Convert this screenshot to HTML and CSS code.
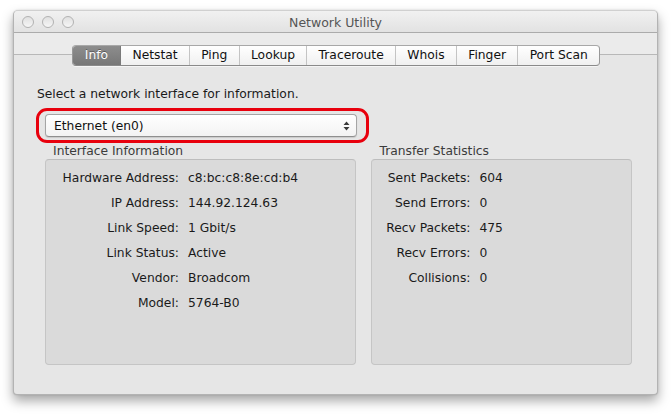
FILE: index.html
```html
<!DOCTYPE html>
<html>
<head>
<meta charset="utf-8">
<title>Network Utility</title>
<link rel="stylesheet" href="styles.css">
</head>
<body>
<div class="window">
  <div class="titlebar">
    <div class="lights"><span class="light"></span><span class="light"></span><span class="light"></span></div>
    <div class="title">Network Utility</div>
    <div></div>
  </div>
  <div class="toolbar">
    <div class="tabs">
      <div class="tab selected">Info</div>
      <div class="tab">Netstat</div>
      <div class="tab">Ping</div>
      <div class="tab">Lookup</div>
      <div class="tab">Traceroute</div>
      <div class="tab">Whois</div>
      <div class="tab">Finger</div>
      <div class="tab">Port Scan</div>
    </div>
  </div>
  <div class="content">
    <div class="prompt">Select a network interface for information.</div>
    <div class="ring">
      <div class="popup">
        <span class="popup-text">Ethernet (en0)</span>
        <svg class="arrows" width="7" height="10" viewBox="0 0 7 10"><path d="M3.5 0.5 L6.5 4 L0.5 4 Z M0.5 6 L6.5 6 L3.5 9.5 Z" fill="#3a3a3a"/></svg>
      </div>
    </div>
    <div class="groups">
      <div class="group group-left">
        <div class="group-label">Interface Information</div>
        <div class="box">
          <div class="rows rows-left">
            <div class="k">Hardware Address:</div><div class="v">c8:bc:c8:8e:cd:b4</div>
            <div class="k">IP Address:</div><div class="v">144.92.124.63</div>
            <div class="k">Link Speed:</div><div class="v">1 Gbit/s</div>
            <div class="k">Link Status:</div><div class="v">Active</div>
            <div class="k">Vendor:</div><div class="v">Broadcom</div>
            <div class="k">Model:</div><div class="v">5764-B0</div>
          </div>
        </div>
      </div>
      <div class="group group-right">
        <div class="group-label">Transfer Statistics</div>
        <div class="box">
          <div class="rows rows-right">
            <div class="k">Sent Packets:</div><div class="v">604</div>
            <div class="k">Send Errors:</div><div class="v">0</div>
            <div class="k">Recv Packets:</div><div class="v">475</div>
            <div class="k">Recv Errors:</div><div class="v">0</div>
            <div class="k">Collisions:</div><div class="v">0</div>
          </div>
        </div>
      </div>
    </div>
  </div>
</div>
</body>
</html>
```

FILE: styles.css
```css
html, body {
  margin: 0;
  padding: 0;
  background: #ffffff;
}
html {
  height: 415px;
  overflow: hidden;
}
body {
  font-family: "DejaVu Sans", "Liberation Sans", sans-serif;
  font-size: 12.3px;
  color: #1a1a1a;
  padding: 10px 0 20px 13px;
  height: 415px;
  box-sizing: border-box;
}
.window {
  width: 645px;
  height: 385px;
  box-sizing: border-box;
  background: #e6e6e6;
  border: 1px solid #b3b3b3;
  border-top-color: #d0d0d0;
  border-radius: 5px 5px 4px 4px;
  box-shadow: 0 6px 12px rgba(0,0,0,0.35), 0 0 2px rgba(0,0,0,0.15);
  display: flex;
  flex-direction: column;
  overflow: hidden;
}
.titlebar {
  height: 21px;
  border-bottom: 1px solid #ababab;
  background: linear-gradient(#f1f1f1, #e2e2e2);
  display: grid;
  grid-template-columns: 1fr auto 1fr;
  align-items: center;
}
.lights {
  display: flex;
  gap: 8px;
  padding-left: 8px;
}
.light {
  width: 10px;
  height: 10px;
  border-radius: 50%;
  border: 1px solid #b2b2b2;
  background: linear-gradient(#e0e0e0, #f6f6f6);
}
.title {
  color: #555555;
  font-size: 12.5px;
  padding-top: 1px;
}
.toolbar {
  height: 33px;
  box-sizing: border-box;
  padding-top: 12px;
  background: linear-gradient(to bottom, #ebebeb 0, #ebebeb 21px, #b8b8b8 21px, #b8b8b8 22px, #e6e6e6 22px);
  display: flex;
  justify-content: center;
}
.tabs {
  display: flex;
  height: 21px;
  box-sizing: border-box;
  border: 1px solid #989898;
  border-top-color: #a8a8a8;
  border-bottom-color: #8a8a8a;
  border-radius: 4px;
  background: linear-gradient(#ffffff, #f0f0f0);
  box-shadow: 0 1px 0 rgba(255,255,255,0.6);
  overflow: hidden;
  margin-left: 1px;
}
.tab {
  padding: 0 11.3px;
  line-height: 19px;
  color: #111;
  border-left: 1px solid #c4c4c4;
  white-space: nowrap;
}
.tab:first-child {
  border-left: none;
}
.tab.selected {
  background: linear-gradient(#8d8d8d, #777777);
  color: #ffffff;
  text-shadow: 0 -1px 0 rgba(0,0,0,0.35);
  padding: 0 12px;
}
.tab.selected + .tab {
  border-left-color: #7a7a7a;
}
.content {
  padding: 20px 25px 0 22px;
  display: flex;
  flex-direction: column;
}
.prompt {
  line-height: 16px;
  padding-left: 1px;
}
.ring {
  margin-top: 6px;
  width: 333px;
  height: 35px;
  box-sizing: border-box;
  border: 3px solid #e8000d;
  border-radius: 11px;
  padding: 3px 9px 3px 6px;
}
.popup {
  height: 23px;
  box-sizing: border-box;
  border: 1px solid #a5a5a5;
  border-bottom-color: #8f8f8f;
  border-radius: 4px;
  background: linear-gradient(#ffffff, #f3f3f3);
  box-shadow: 0 1px 1px rgba(0,0,0,0.12);
  display: flex;
  align-items: center;
  justify-content: space-between;
  padding: 0 6px 0 8px;
}
.popup-text {
  color: #111;
}
.arrows {
  display: block;
}
.groups {
  display: flex;
  gap: 15px;
  padding-left: 9px;
}
.group {
  display: flex;
  flex-direction: column;
}
.group-left {
  width: 312px;
}
.group-right {
  width: 261px;
}
.group-label {
  line-height: 16px;
  color: #3b3b3b;
  padding-left: 8px;
}
.box {
  height: 206px;
  box-sizing: border-box;
  background: #dadada;
  border: 1px solid #c5c5c5;
  border-top-color: #bdbdbd;
  border-radius: 4px;
  padding-top: 5px;
}
.rows {
  display: grid;
  column-gap: 9px;
  grid-auto-rows: 25px;
  align-items: center;
}
.rows-left {
  grid-template-columns: 133px 1fr;
}
.rows-right {
  grid-template-columns: 98px 1fr;
}
.k {
  text-align: right;
  color: #1a1a1a;
  white-space: nowrap;
}
.v {
  color: #1a1a1a;
  white-space: nowrap;
}
```
